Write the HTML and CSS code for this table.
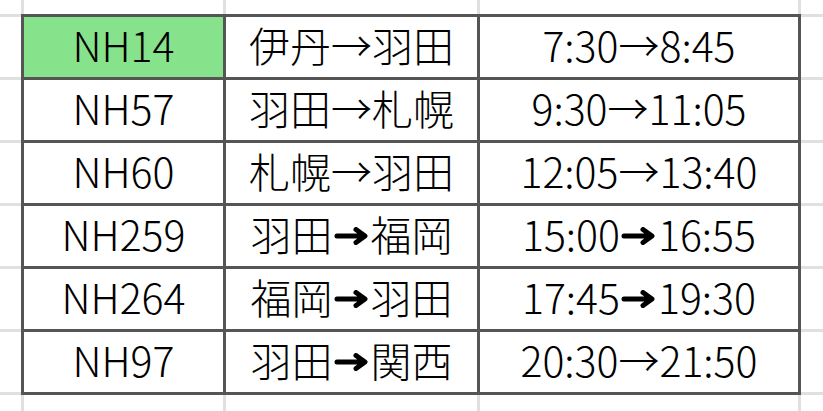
FILE: index.html
```html
<!DOCTYPE html>
<html lang="ja">
<head>
<meta charset="utf-8">
<title>Flights</title>
<link rel="stylesheet" href="styles.css">
</head>
<body>
<div class="sheet">
  <div class="cell hl">NH14</div><div class="cell">伊丹→羽田</div><div class="cell">7:30→8:45</div>
  <div class="cell">NH57</div><div class="cell">羽田→札幌</div><div class="cell">9:30→11:05</div>
  <div class="cell">NH60</div><div class="cell">札幌→羽田</div><div class="cell">12:05→13:40</div>
  <div class="cell">NH259</div><div class="cell">羽田<svg class="hv" viewBox="0 0 36 18"><path d="M3 9H30M22 2.5L31 9L22 15.5"/></svg>福岡</div><div class="cell">15:00<svg class="hv" viewBox="0 0 36 18"><path d="M3 9H30M22 2.5L31 9L22 15.5"/></svg>16:55</div>
  <div class="cell">NH264</div><div class="cell">福岡<svg class="hv" viewBox="0 0 36 18"><path d="M3 9H30M22 2.5L31 9L22 15.5"/></svg>羽田</div><div class="cell">17:45<svg class="hv" viewBox="0 0 36 18"><path d="M3 9H30M22 2.5L31 9L22 15.5"/></svg>19:30</div>
  <div class="cell">NH97</div><div class="cell">羽田<svg class="hv" viewBox="0 0 36 18"><path d="M3 9H30M22 2.5L31 9L22 15.5"/></svg>関西</div><div class="cell">20:30→21:50</div>
</div>
</body>
</html>
```
FILE: styles.css
```css
html, body {
  margin: 0;
  padding: 0;
}
body {
  width: 823px;
  height: 411px;
  overflow: hidden;
  font-family: "Noto Sans CJK JP", "Noto Sans", sans-serif;
  background-color: #fff;
  background-image:
    linear-gradient(to right, transparent 21px, #e0e0e0 21px, #e0e0e0 24px, transparent 24px),
    linear-gradient(to right, transparent 223px, #e0e0e0 223px, #e0e0e0 226px, transparent 226px),
    linear-gradient(to right, transparent 477px, #e0e0e0 477px, #e0e0e0 480px, transparent 480px),
    linear-gradient(to right, transparent 798px, #e0e0e0 798px, #e0e0e0 801px, transparent 801px),
    repeating-linear-gradient(to bottom, transparent 0, transparent 14px, #e0e0e0 14px, #e0e0e0 17px, transparent 17px, transparent 63px);
  background-position: 0 0, 0 0, 0 0, 0 0, 0 0;
  background-repeat: no-repeat, no-repeat, no-repeat, no-repeat, repeat-y;
  background-size: 100% 100%, 100% 100%, 100% 100%, 100% 100%, 100% 63px;
}
.sheet {
  margin: 14px 0 0 21px;
  width: max-content;
  display: grid;
  grid-template-columns: 199px 251px 318px;
  grid-auto-rows: 60px;
  gap: 3px;
  padding: 3px;
  background: #555;
}
.cell {
  background: #fff;
  display: flex;
  align-items: center;
  justify-content: center;
  padding-bottom: 5px;
  box-sizing: border-box;
  font-size: 41px;
  font-weight: 300;
  line-height: 1;
  color: #000;
  white-space: nowrap;
}
.hl {
  background: #87e28c;
}
.hv {
  width: 36px;
  height: 18px;
  margin: 4px 1px 0;
  fill: none;
  stroke: #000;
  stroke-width: 5;
  stroke-linecap: round;
  stroke-linejoin: round;
}
```
